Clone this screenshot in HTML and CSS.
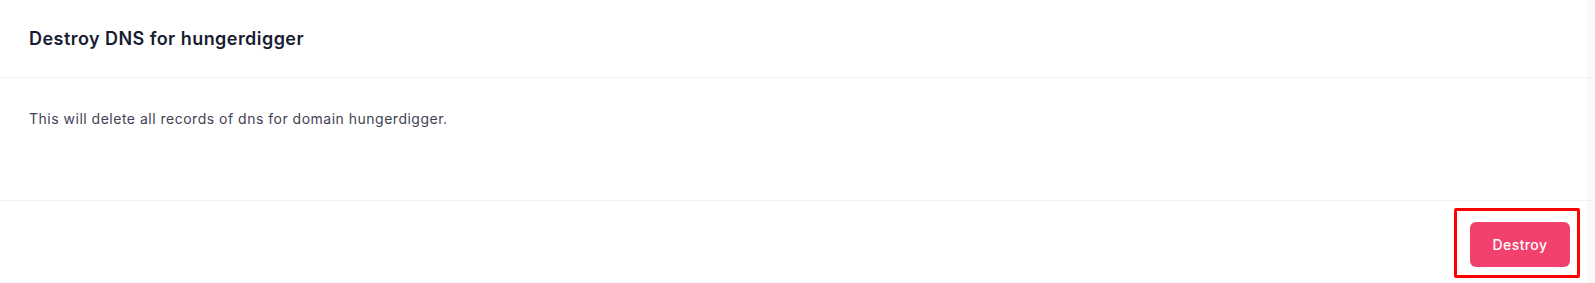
FILE: index.html
```html
<!DOCTYPE html>
<html lang="en">
<head>
<meta charset="utf-8">
<title>Destroy DNS</title>
<link rel="stylesheet" href="styles.css">
</head>
<body>
<div class="card">
  <div class="card-header">
    <h3 class="card-title">Destroy DNS for hungerdigger</h3>
  </div>
  <div class="card-body">
    <p class="message">This will delete all records of dns for domain hungerdigger.</p>
  </div>
  <div class="card-footer">
    <div class="btn-wrap">
      <button class="btn-danger" type="button">Destroy</button>
      <span class="highlight"></span>
    </div>
  </div>
</div>
</body>
</html>
```

FILE: styles.css
```css
html, body {
  margin: 0;
  padding: 0;
}
body {
  width: 1595px;
  height: 283px;
  overflow: hidden;
  background: linear-gradient(to right, #ffffff 0, #ffffff 1587px, #f9f9f9 1587px);
  font-family: Inter, "Open Sans", sans-serif;
  color: #3f4254;
}
.card {
  display: flex;
  flex-direction: column;
}
.card-header {
  height: 77px;
  display: flex;
  align-items: center;
  padding-left: 29px;
  border-bottom: 1px solid #eff2f5;
}
.card-title {
  margin: 0;
  font-size: 18px;
  font-weight: 600;
  color: #181c32;
  line-height: 27px;
  letter-spacing: 0.45px;
}
.card-body {
  height: 92px;
  padding: 30px 29px 0;
  border-bottom: 1px solid #eff2f5;
}
.message {
  margin: 0;
  font-size: 14px;
  line-height: 21px;
  font-weight: 400;
  color: #3f4254;
  letter-spacing: 0.5px;
}
.card-footer {
  display: flex;
  justify-content: flex-end;
  padding: 21px 25px 0 0;
}
.btn-wrap {
  position: relative;
  display: flex;
}
.btn-danger {
  width: 100px;
  height: 45px;
  border: 0;
  border-radius: 6px;
  background: #f1416c;
  color: #ffffff;
  font-family: Inter, "Open Sans", sans-serif;
  font-size: 14px;
  font-weight: 500;
  letter-spacing: 0.4px;
  padding: 0;
  cursor: pointer;
}
.highlight {
  position: absolute;
  left: -16px;
  top: -14px;
  right: -10px;
  bottom: -11px;
  border: 3px solid #ff0000;
  border-radius: 2px;
  pointer-events: none;
}
```
